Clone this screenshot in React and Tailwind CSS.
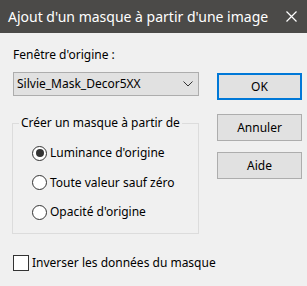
import { useState } from "react"

function Radio({ label, checked, onClick }) {
  return (
    <label onClick={onClick} className="flex items-center h-4 cursor-default whitespace-nowrap">
      <span className="w-[15px] h-[15px] rounded-full border-[1.5px] border-[#333] bg-white flex items-center justify-center shrink-0">
        {checked && <span className="w-[8px] h-[8px] rounded-full bg-[#333]" />}
      </span>
      <span className="ml-[3px]">{label}</span>
    </label>
  )
}

function Button({ children, primary, className = "" }) {
  return (
    <button
      type="button"
      className={
        "w-[85px] h-[27px] bg-[#e1e1e1] text-[12px] text-black flex items-center justify-center " +
        (primary ? "border-2 border-[#0078d7] " : "border border-[#adadad] ") +
        className
      }
    >
      {children}
    </button>
  )
}

export default function App() {
  const [mode, setMode] = useState(0)
  const [invert, setInvert] = useState(false)

  const options = ["Luminance d'origine", "Toute valeur sauf zéro", "Opacité d'origine"]

  return (
    <div className="w-[307px] h-[286px] bg-[#f0f0f0] text-[12px] text-black overflow-hidden font-['Noto_Sans',sans-serif]">
      {/* Title bar */}
      <div className="h-[33px] bg-[#4b4a48] flex items-center justify-between pl-2 pr-[10px]">
        <span className="text-white text-[14px] leading-none whitespace-nowrap">Ajout d'un masque à partir d'une image</span>
        <svg width="11" height="11" viewBox="0 0 11 11" className="shrink-0">
          <path d="M0.5 0.5 L10.5 10.5 M10.5 0.5 L0.5 10.5" stroke="#fff" strokeWidth="1.2" />
        </svg>
      </div>

      <div className="flex pl-[13px]">
        {/* Left column */}
        <div className="w-[186px] flex flex-col">
          <div className="mt-[14px] leading-4">Fenêtre d'origine :</div>
          <div className="mt-[9px] h-6 bg-[#e1e1e1] border border-[#adadad] flex items-center justify-between pl-[3px] pr-[5px]">
            <span>Silvie_Mask_Decor5XX</span>
            <svg width="10" height="6" viewBox="0 0 10 6">
              <path d="M0.5 0.5 L5 5 L9.5 0.5" stroke="#333" strokeWidth="1" fill="none" />
            </svg>
          </div>

          <fieldset className="mt-[19px] -ml-px h-[119px] border border-[#dcdcdc] p-0">
            <legend className="ml-[6px] px-[2px] leading-4 whitespace-nowrap">Créer un masque à partir de</legend>
            <div className="flex flex-col mt-[14px] gap-[13.5px] pl-[19px]">
              {options.map((o, i) => (
                <Radio key={o} label={o} checked={mode === i} onClick={() => setMode(i)} />
              ))}
            </div>
          </fieldset>

          <label onClick={() => setInvert(!invert)} className="mt-[21px] flex items-center h-4 whitespace-nowrap">
            <span className="w-4 h-4 border-[1.5px] border-[#333] bg-white flex items-center justify-center shrink-0">
              {invert && (
                <svg width="10" height="8" viewBox="0 0 10 8">
                  <path d="M1 4 L4 7 L9 1" stroke="#333" strokeWidth="1.5" fill="none" />
                </svg>
              )}
            </span>
            <span className="ml-[3px]">Inverser les données du masque</span>
          </label>
        </div>

        {/* Right column */}
        <div className="ml-[18px] flex flex-col">
          <Button primary className="mt-[40px]">OK</Button>
          <Button className="mt-[14px]">Annuler</Button>
          <Button className="mt-[11px]">Aide</Button>
        </div>
      </div>
    </div>
  )
}
